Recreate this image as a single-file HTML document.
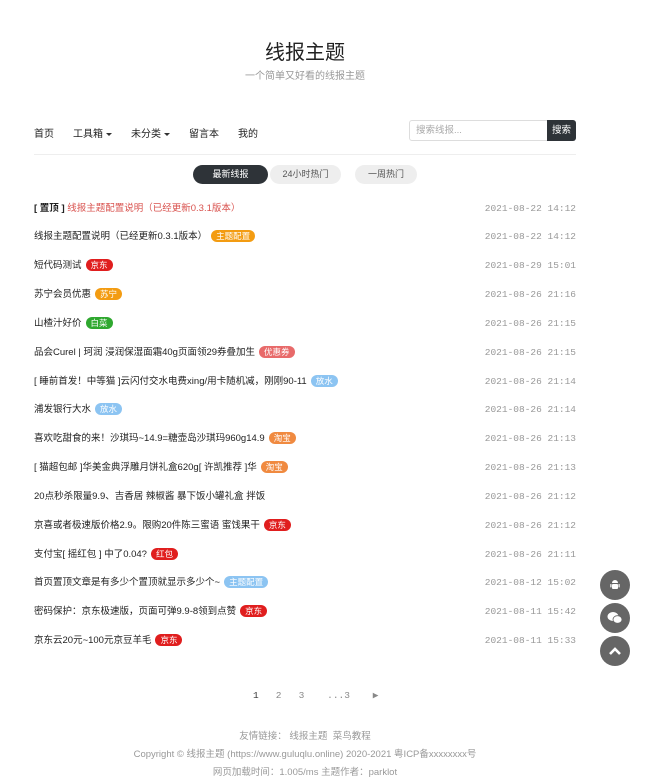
<!DOCTYPE html>
<html><head><meta charset="utf-8"><style>
*{margin:0;padding:0;box-sizing:border-box}
body{width:655px;height:784px;background:#fff;font-family:"Liberation Sans","Noto Sans CJK SC",sans-serif;color:#333;position:relative;overflow:hidden}
.a{position:absolute}
h1{position:absolute;top:36px;left:0;width:610px;text-align:center;font-size:20px;font-weight:normal;color:#222}
.sub{top:67px;left:0;width:610px;text-align:center;font-size:10px;color:#999}
.nav{top:125px;left:34px;font-size:10px;color:#222}
.nav span{margin-right:19px}
.car{display:inline-block;border-left:3px solid transparent;border-right:3px solid transparent;border-top:3px solid #333;vertical-align:middle;margin-left:3px}
.search{left:409px;top:120px;width:139px;height:21px;border:1px solid #ddd;border-radius:3px 0 0 3px;font-size:9.5px;color:#aaa;padding:0 6px;line-height:19px}
.btn{left:547px;top:120px;width:29px;height:21px;background:#2e3338;color:#fff;font-size:9.5px;text-align:center;line-height:21px;border-radius:0 3px 3px 0}
.hr{left:34px;top:154px;width:542px;height:1px;background:#eee}
.tab{top:165px;height:19px;border-radius:10px;font-size:9px;text-align:center;line-height:19px;background:#eee;color:#555}
.row{left:34px;width:542px;font-size:9.5px;height:14px;line-height:14px;color:#222}
.row .t{position:absolute;right:0;top:0;font-family:"Liberation Mono",monospace;font-size:9.5px;color:#999}
.tag{display:inline-block;font-size:8.5px;line-height:12px;height:12px;padding:0 5px;border-radius:6px;color:#fff;margin-left:4px;vertical-align:middle}
.o{background:#f39c12}.r{background:#e01e1e}.g{background:#2fa82f}.b{background:#8cc4f2}.p{background:#e86a6a}.oo{background:#f08a40}
.pg{top:690px;left:253px;font-size:9.5px;color:#888;font-family:"Liberation Mono",monospace}
.ft{left:0;width:610px;text-align:center;font-size:9.5px;color:#999}
.c{left:600px;width:30px;height:30px;border-radius:50%;background:#666;display:flex;align-items:center;justify-content:center}
</style></head><body>
<h1>线报主题</h1>
<div class="a sub">一个简单又好看的线报主题</div>
<div class="a nav"><span>首页</span><span>工具箱<i class="car"></i></span><span>未分类<i class="car"></i></span><span>留言本</span><span>我的</span></div>
<div class="a search">搜索线报...</div>
<div class="a btn">搜索</div>
<div class="a hr"></div>
<div class="a tab" style="left:193px;width:75px;background:#2e3338;color:#fff">最新线报</div>
<div class="a tab" style="left:270px;width:71px">24小时热门</div>
<div class="a tab" style="left:355px;width:62px">一周热门</div>

<div class="a row" style="top:202px"><b>[ 置顶 ]</b> <span style="color:#d9534f">线报主题配置说明（已经更新0.3.1版本）</span><span class="t">2021-08-22 14:12</span></div>
<div class="a row" style="top:230px">线报主题配置说明（已经更新0.3.1版本）<span class="tag o">主题配置</span><span class="t">2021-08-22 14:12</span></div>
<div class="a row" style="top:259px">短代码测试<span class="tag r">京东</span><span class="t">2021-08-29 15:01</span></div>
<div class="a row" style="top:288px">苏宁会员优惠<span class="tag o">苏宁</span><span class="t">2021-08-26 21:16</span></div>
<div class="a row" style="top:317px">山楂汁好价<span class="tag g">白菜</span><span class="t">2021-08-26 21:15</span></div>
<div class="a row" style="top:346px">品会Curel | 珂润 浸润保湿面霜40g页面领29券叠加生<span class="tag p">优惠券</span><span class="t">2021-08-26 21:15</span></div>
<div class="a row" style="top:375px">[ 睡前首发！中等猫 ]云闪付交水电费xing/用卡随机减，刚刚90-11<span class="tag b">放水</span><span class="t">2021-08-26 21:14</span></div>
<div class="a row" style="top:403px">浦发银行大水<span class="tag b">放水</span><span class="t">2021-08-26 21:14</span></div>
<div class="a row" style="top:432px">喜欢吃甜食的来！沙琪玛~14.9=糖壶岛沙琪玛960g14.9<span class="tag oo">淘宝</span><span class="t">2021-08-26 21:13</span></div>
<div class="a row" style="top:461px">[ 猫超包邮 ]华美金典浮雕月饼礼盒620g[ 许凯推荐 ]华<span class="tag oo">淘宝</span><span class="t">2021-08-26 21:13</span></div>
<div class="a row" style="top:490px">20点秒杀限量9.9、吉香居 辣椒酱 暴下饭小罐礼盒 拌饭<span class="t">2021-08-26 21:12</span></div>
<div class="a row" style="top:519px">京喜或者极速版价格2.9。限购20件陈三蜜语 蜜饯果干<span class="tag r">京东</span><span class="t">2021-08-26 21:12</span></div>
<div class="a row" style="top:548px">支付宝[ 摇红包 ] 中了0.04?<span class="tag r">红包</span><span class="t">2021-08-26 21:11</span></div>
<div class="a row" style="top:576px">首页置顶文章是有多少个置顶就显示多少个~<span class="tag b">主题配置</span><span class="t">2021-08-12 15:02</span></div>
<div class="a row" style="top:605px">密码保护：京东极速版，页面可弹9.9-8领到点赞<span class="tag r">京东</span><span class="t">2021-08-11 15:42</span></div>
<div class="a row" style="top:634px">京东云20元~100元京豆羊毛<span class="tag r">京东</span><span class="t">2021-08-11 15:33</span></div>

<div class="a pg"><span style="color:#333">1</span>&nbsp;&nbsp;&nbsp;2&nbsp;&nbsp;&nbsp;3&nbsp;&nbsp;&nbsp;&nbsp;...3&nbsp;&nbsp;&nbsp;&nbsp;▶</div>
<div class="a ft" style="top:728px">友情链接：&nbsp;线报主题&nbsp;&nbsp;菜鸟教程</div>
<div class="a ft" style="top:746px">Copyright © 线报主题 (https://www.guluqlu.online) 2020-2021 粤ICP备xxxxxxxx号</div>
<div class="a ft" style="top:764px">网页加载时间：1.005/ms 主题作者：parklot</div>

<div class="a c" style="top:570px"><svg width="14" height="14" viewBox="0 0 14 14"><path d="M4 5a3 3 0 0 1 6 0z" fill="#fff"/><rect x="4" y="6" width="6" height="5" rx="1" fill="#fff"/><rect x="2.3" y="6" width="1.2" height="3.5" rx=".6" fill="#fff"/><rect x="10.5" y="6" width="1.2" height="3.5" rx=".6" fill="#fff"/></svg></div>
<div class="a c" style="top:603px"><svg width="16" height="14" viewBox="0 0 16 14"><ellipse cx="6" cy="5.5" rx="5.5" ry="4.5" fill="#fff"/><ellipse cx="10.5" cy="8.5" rx="4.5" ry="3.8" fill="#fff" stroke="#666" stroke-width=".8"/></svg></div>
<div class="a c" style="top:636px"><svg width="14" height="10" viewBox="0 0 14 10"><path d="M2 8l5-5 5 5" fill="none" stroke="#fff" stroke-width="2.6"/></svg></div>
</body></html>
